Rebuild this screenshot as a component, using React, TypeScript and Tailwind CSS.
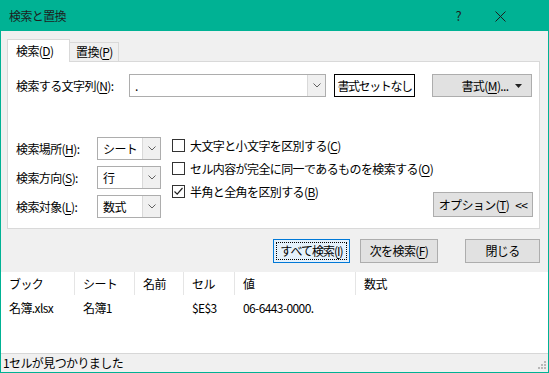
import React from "react";

const font = { fontFamily: '"Noto Sans CJK JP", "Noto Sans", sans-serif' };

function U({ children }: { children: React.ReactNode }) {
  return <span className="underline underline-offset-2">{children}</span>;
}

function Chevron() {
  return (
    <svg width="8" height="5" viewBox="0 0 8 5" className="text-[#606060]">
      <polyline points="0.5,0.5 4,4 7.5,0.5" fill="none" stroke="currentColor" strokeWidth="1" />
    </svg>
  );
}

function Combo({ value, width }: { value: string; width: string }) {
  return (
    <div className={`flex h-[23px] ${width} border border-[#adadad] bg-white`}>
      <div className="flex flex-1 items-center whitespace-nowrap pl-[5px] text-[12px] text-black">{value}</div>
      <div className="flex w-[18px] items-center justify-center border-l border-[#d9d9d9] bg-[#f0f0f0]">
        <Chevron />
      </div>
    </div>
  );
}

function Check({ checked, children }: { checked?: boolean; children: React.ReactNode }) {
  return (
    <div className="flex h-[23px] items-center gap-[5px] whitespace-nowrap text-[12px] text-black">
      <div className="flex h-[13px] w-[13px] shrink-0 items-center justify-center border border-[#333] bg-white">
        {checked && (
          <svg width="11" height="11" viewBox="0 0 11 11">
            <polyline points="1.5,5.5 4.2,8.2 9.5,2" fill="none" stroke="#222" strokeWidth="1.2" />
          </svg>
        )}
      </div>
      <span>{children}</span>
    </div>
  );
}

function Btn({ children, className = "" }: { children: React.ReactNode; className?: string }) {
  return (
    <div
      className={`flex items-center justify-center whitespace-nowrap border border-[#adadad] bg-[#e1e1e1] text-[12px] text-black ${className}`}
    >
      {children}
    </div>
  );
}

export default function App() {
  const cols = [
    { w: "w-[74px]", h: "ブック", v: "名簿.xlsx" },
    { w: "w-[60px]", h: "シート", v: "名簿1" },
    { w: "w-[49px]", h: "名前", v: "" },
    { w: "w-[51px]", h: "セル", v: "$E$3" },
    { w: "w-[121px]", h: "値", v: "06-6443-0000." },
    { w: "flex-1", h: "数式", v: "" },
  ];

  return (
    <div
      className="flex h-[373px] w-[549px] flex-col border border-[#00b294] bg-[#f0f0f0] tracking-[-0.6px]"
      style={font}
    >
      {/* title bar */}
      <div className="flex h-[30px] shrink-0 items-center bg-[#00b294] pl-[8px] text-[12px] text-[#1e1e1e]">
        <span>検索と置換</span>
        <span className="ml-auto mr-[34px] text-[13px]">?</span>
        <svg width="11" height="11" viewBox="0 0 11 11" className="mr-[42px]">
          <path d="M0.5 0.5 L10.5 10.5 M10.5 0.5 L0.5 10.5" stroke="#1e1e1e" strokeWidth="1" />
        </svg>
      </div>

      {/* tabs */}
      <div className="mt-[8px] flex h-[22px] items-end pl-[6px] text-[12px] text-black">
        <div className="relative z-10 -mb-px flex h-[23px] w-[63px] items-center border-x border-t border-[#d9d9d9] bg-white pl-[8px]">
          検索(<U>D</U>)
        </div>
        <div className="flex h-[19px] w-[49px] items-center border-r border-t border-[#d9d9d9] pl-[6px]">
          置換(<U>P</U>)
        </div>
      </div>

      {/* panel */}
      <div className="ml-[6px] flex h-[168px] w-[533px] flex-col whitespace-nowrap border border-[#d9d9d9] bg-white pl-[8px] text-[12px] text-black">
        <div className="mt-[12px] flex items-center">
          <div className="w-[113px]">
            検索する文字列(<U>N</U>):
          </div>
          <Combo value="." width="w-[197px]" />
          <div className="ml-[8px] flex h-[23px] w-[81px] items-center justify-center border border-black bg-white tracking-[-1.4px]">
            書式セットなし
          </div>
          <Btn className="relative ml-[17px] h-[23px] w-[100px]">
            <span className="ml-[6px]">
              書式(<U>M</U>)...
            </span>
            <svg width="7" height="4" viewBox="0 0 7 4" className="absolute right-[9px] top-[9px]">
              <polygon points="0,0 7,0 3.5,4" fill="#222" />
            </svg>
          </Btn>
        </div>

        <div className="mt-[37px] flex">
          <div className="flex flex-col">
            {[
              ["検索場所(", "H", "):", "シート"],
              ["検索方向(", "S", "):", "行"],
              ["検索対象(", "L", "):", "数式"],
            ].map(([a, k, b, v]) => (
              <div key={k} className="flex h-[29px] items-center">
                <div className="w-[81px]">
                  {a}
                  <U>{k}</U>
                  {b}
                </div>
                <Combo value={v} width="w-[64px]" />
              </div>
            ))}
          </div>
          <div className="ml-[11px] flex w-[240px] flex-col">
            <Check>
              大文字と小文字を区別する(<U>C</U>)
            </Check>
            <Check>
              セル内容が完全に同一であるものを検索する(<U>O</U>)
            </Check>
            <Check checked>
              半角と全角を区別する(<U>B</U>)
            </Check>
          </div>
          <div className="ml-auto mr-[6px] flex flex-col">
            <Btn className="mt-[58px] h-[25px] w-[100px]">
              オプション(<U>T</U>)<span className="ml-[6px]">&lt;&lt;</span>
            </Btn>
          </div>
        </div>
      </div>

      {/* action buttons */}
      <div className="mt-[10px] flex h-[24px] justify-end pr-[8px]">
        <div className="flex h-[24px] w-[77px] items-center justify-center border border-[#0078d7] bg-[#e5f1fb] p-[2px]">
          <div className="flex h-full w-full items-center justify-center whitespace-nowrap border border-dotted border-black text-[12px] tracking-[-1px] text-black">
            すべて検索(<U>I</U>)
          </div>
        </div>
        <Btn className="ml-[10px] w-[78px]">
          次を検索(<U>F</U>)
        </Btn>
        <Btn className="ml-[27px] w-[75px]">閉じる</Btn>
      </div>

      {/* results list */}
      <div className="mt-[9px] flex h-[81px] flex-col whitespace-nowrap bg-white text-[12px] text-black">
        <div className="flex h-[23px]">
          {cols.map((c, i) => (
            <div
              key={c.h}
              className={`flex items-center pl-[8px] ${c.w} ${i < cols.length - 1 ? "border-r border-[#e5e5e5]" : ""}`}
            >
              {c.h}
            </div>
          ))}
        </div>
        <div className="mt-[2px] flex h-[22px]">
          {cols.map((c) => (
            <div key={c.h} className={`flex items-center pl-[8px] ${c.w}`}>
              {c.v}
            </div>
          ))}
        </div>
      </div>

      {/* status bar */}
      <div className="flex flex-1 items-center border-t border-[#d7d7d7] pl-[2px] text-[12px] text-black">
        <span>1セルが見つかりました</span>
        <svg width="12" height="12" viewBox="0 0 12 12" className="ml-auto mr-[1px] mt-[6px]">
          {[
            [9, 1],
            [6, 4],
            [9, 4],
            [3, 7],
            [6, 7],
            [9, 7],
          ].map(([x, y]) => (
            <rect key={`${x}-${y}`} x={x} y={y} width="2" height="2" fill="#b8b8b8" />
          ))}
        </svg>
      </div>
    </div>
  );
}
